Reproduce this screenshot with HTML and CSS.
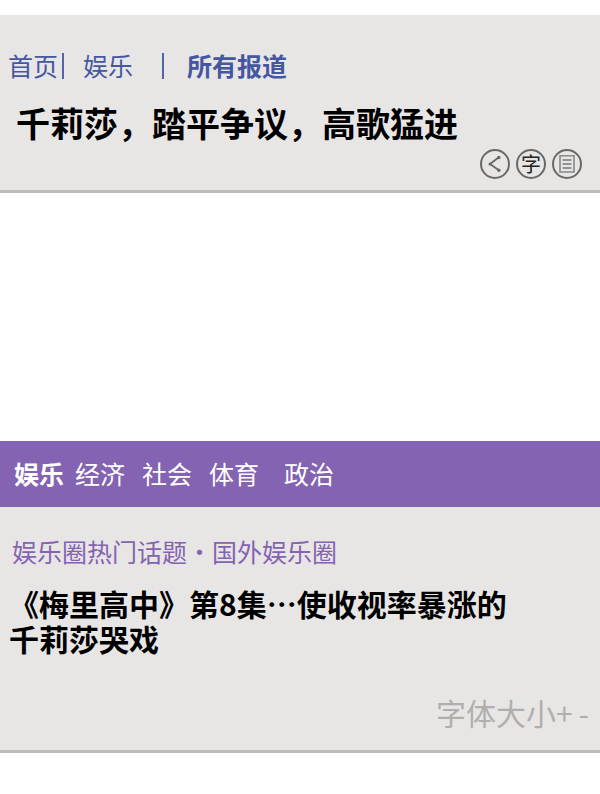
FILE: index.html
```
<!DOCTYPE html>
<html lang="zh-CN">
<head>
  <meta charset="UTF-8" />
  <meta name="viewport" content="width=device-width, initial-scale=1" />
  <title>千莉莎，踏平争议，高歌猛进</title>
  <link rel="stylesheet" href="styles.css">
</head>
<body>
  <header class="article-header">
    <nav class="breadcrumb">
      <a href="#">首页</a>
      <span class="divider"></span>
      <a class="crumb-section" href="#">娱乐</a>
      <span class="divider divider-wide"></span>
      <a class="current" href="#">所有报道</a>
    </nav>
    <h1 class="article-title">千莉莎，踏平争议，高歌猛进</h1>
    <div class="article-tools">
      <button type="button" aria-label="分享">
        <svg viewBox="0 0 26 26" width="26" height="26">
          <path d="M16.5 6.5 L8 13 L16.5 19" fill="none" stroke="#666" stroke-width="1.7" />
          <circle cx="16.8" cy="6.5" r="1.7" fill="#666" />
          <circle cx="8" cy="13" r="1.5" fill="#666" />
          <circle cx="16.8" cy="19.3" r="1.7" fill="#666" />
        </svg>
      </button>
      <button type="button">字</button>
      <button type="button" aria-label="全文">
        <svg viewBox="0 0 26 26" width="26" height="26">
          <path d="M6 4.8 H20 V21 H6 Z" fill="none" stroke="#888" stroke-width="1.6" />
          <path d="M8.5 9 H17.5 M8.5 13 H17.5 M8.5 17 H17.5" stroke="#777" stroke-width="1.6" />
        </svg>
      </button>
    </div>
  </header>

  <main>
    <div class="media"></div>

    <nav class="category-nav">
      <a class="active" href="#">娱乐</a>
      <a href="#">经济</a>
      <a href="#">社会</a>
      <a href="#">体育</a>
      <a href="#">政治</a>
    </nav>

    <section class="story">
      <p class="topic">娱乐圈热门话题・国外娱乐圈</p>
      <h2 class="headline">《梅里高中》第8集⋯使收视率暴涨的<br>千莉莎哭戏</h2>
      <div class="font-size">
        <span>字体大小</span>
        <button type="button" aria-label="放大字体">+</button>
        <button type="button" aria-label="缩小字体">-</button>
      </div>
    </section>
  </main>
</body>
</html>
```
FILE: styles.css
```
* {
  box-sizing: border-box;
}
body {
  margin: 0;
  padding-top: 15px;
  background: #fff;
  color: #000;
  font-family: "Noto Sans CJK SC", sans-serif;
}
a {
  color: inherit;
  text-decoration: none;
}
button {
  padding: 0;
  border: none;
  background: none;
  color: inherit;
  font: inherit;
  cursor: pointer;
}
.article-header {
  padding: 33px 16px 11px;
  background: #e8e6e5;
  border-bottom: 3px solid #bdbbbb;
}
.breadcrumb {
  display: flex;
  align-items: center;
  margin-left: -8px;
  color: #4557a0;
  font-size: 25px;
  line-height: 35px;
}
.divider {
  width: 2px;
  height: 26px;
  margin: 0 19px 0 4px;
  background: #5464a8;
}
.divider-wide {
  margin: 0 23px 0 29px;
}
.current {
  font-weight: bold;
}
.article-title {
  margin: 19px 0 6px;
  font-size: 34px;
  font-weight: bold;
  line-height: 41px;
}
.article-tools {
  display: flex;
  justify-content: flex-end;
  gap: 6px;
  margin-right: 2px;
}
.article-tools button {
  display: flex;
  align-items: center;
  justify-content: center;
  width: 30px;
  height: 30px;
  border: 2px solid #696868;
  border-radius: 50%;
  color: #222;
  font-size: 20px;
  line-height: 26px;
}
.media {
  height: 248px;
}
.category-nav {
  display: flex;
  gap: 17px;
  padding: 13px 14px 15px;
  background: #8463b2;
  color: #fff;
  font-size: 25px;
  line-height: 38px;
}
.category-nav .active {
  margin-right: -6px;
  font-weight: bold;
}
.category-nav a:last-child {
  margin-left: 8px;
}
.story {
  padding: 26px 9px 18px;
  background: #e8e6e5;
  border-bottom: 3px solid #bdbbbb;
}
.topic {
  margin: 0 3px 17px;
  color: #8463b2;
  font-size: 25px;
  line-height: 36px;
}
.headline {
  margin: 0;
  font-size: 30px;
  font-weight: bold;
  line-height: 35px;
}
.font-size {
  display: flex;
  justify-content: flex-end;
  margin-top: 36px;
  margin-right: 2px;
  color: #b0afae;
  font-size: 30px;
  line-height: 40px;
}
.font-size button {
  margin-right: 6px;
}
.font-size button:last-child {
  margin-right: 0;
}
```
